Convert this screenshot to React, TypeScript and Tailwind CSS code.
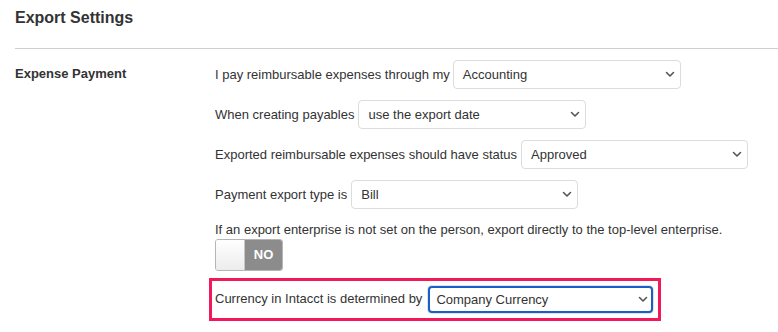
import React from "react";

function Chevron() {
  return (
    <svg width="10" height="7" viewBox="0 0 10 7" className="shrink-0">
      <path d="M1.5 1.5 L5 5 L8.5 1.5" fill="none" stroke="#555" strokeWidth="1.6" strokeLinecap="round" strokeLinejoin="round" />
    </svg>
  );
}

function Select({ value, width }: { value: string; width: string }) {
  return (
    <div className={`${width} h-[29px] flex items-center justify-between pl-[9px] pr-[5px] border border-[#dcdcdc] rounded-[4px] bg-white text-[13px] text-[#333]`}>
      <span>{value}</span>
      <Chevron />
    </div>
  );
}

export default function App() {
  return (
    <div className="bg-white w-[778px] h-[332px] pl-[15px] font-['Liberation_Sans',Arial,sans-serif] text-[#333]">
      <h2 className="pt-[8px] h-[48px] text-[16px] leading-[20px] font-bold text-[#333]">Export Settings</h2>
      <div className="h-px bg-[#cfcfcf]" />
      <div className="flex pt-[11px]">
        <div className="w-[200px] shrink-0 pt-[6px] text-[13px] leading-[16px] font-bold">Expense Payment</div>
        <div className="flex flex-col text-[13px] leading-[16px]">
          <div className="flex items-center gap-[3px]">
            <span>I pay reimbursable expenses through my</span>
            <Select value="Accounting" width="w-[228px]" />
          </div>
          <div className="flex items-center gap-[4px] mt-[11px]">
            <span>When creating payables</span>
            <Select value="use the export date" width="w-[228px]" />
          </div>
          <div className="flex items-center gap-[4px] mt-[11px]">
            <span>Exported reimbursable expenses should have status</span>
            <Select value="Approved" width="w-[227px]" />
          </div>
          <div className="flex items-center gap-[4px] mt-[11px]">
            <span>Payment export type is</span>
            <Select value="Bill" width="w-[227px]" />
          </div>
          <div className="mt-[12px] leading-[18px]">
            If an export enterprise is not set on the person, export directly to the top-level enterprise.
          </div>
          <div className="flex w-[68px] h-[32px] border border-[#b5b5b5] rounded-[3px] overflow-hidden">
            <div className="w-[29px] bg-gradient-to-b from-white to-[#ececec] border-r border-[#c8c8c8]" />
            <div className="flex-1 bg-[#8c8c8c] flex items-center justify-center text-white font-bold text-[13px]">NO</div>
          </div>
          <div className="mt-[7px] -ml-[6px] w-[452px] h-[43px] border-[3px] border-[#f2195a] flex items-center pl-[3px] gap-[5px]">
            <span className="-mt-[2px]">Currency in Intacct is determined by</span>
            <div className="p-px rounded-[5px] bg-[#e2e2e2]">
              <div className="w-[225px] h-[27px] flex items-center justify-between pl-[6px] pr-[3px] border-2 border-[#1a5fc9] rounded-[4px] bg-white text-[13px] text-[#333]">
                <span>Company Currency</span>
                <Chevron />
              </div>
            </div>
          </div>
        </div>
      </div>
    </div>
  );
}
